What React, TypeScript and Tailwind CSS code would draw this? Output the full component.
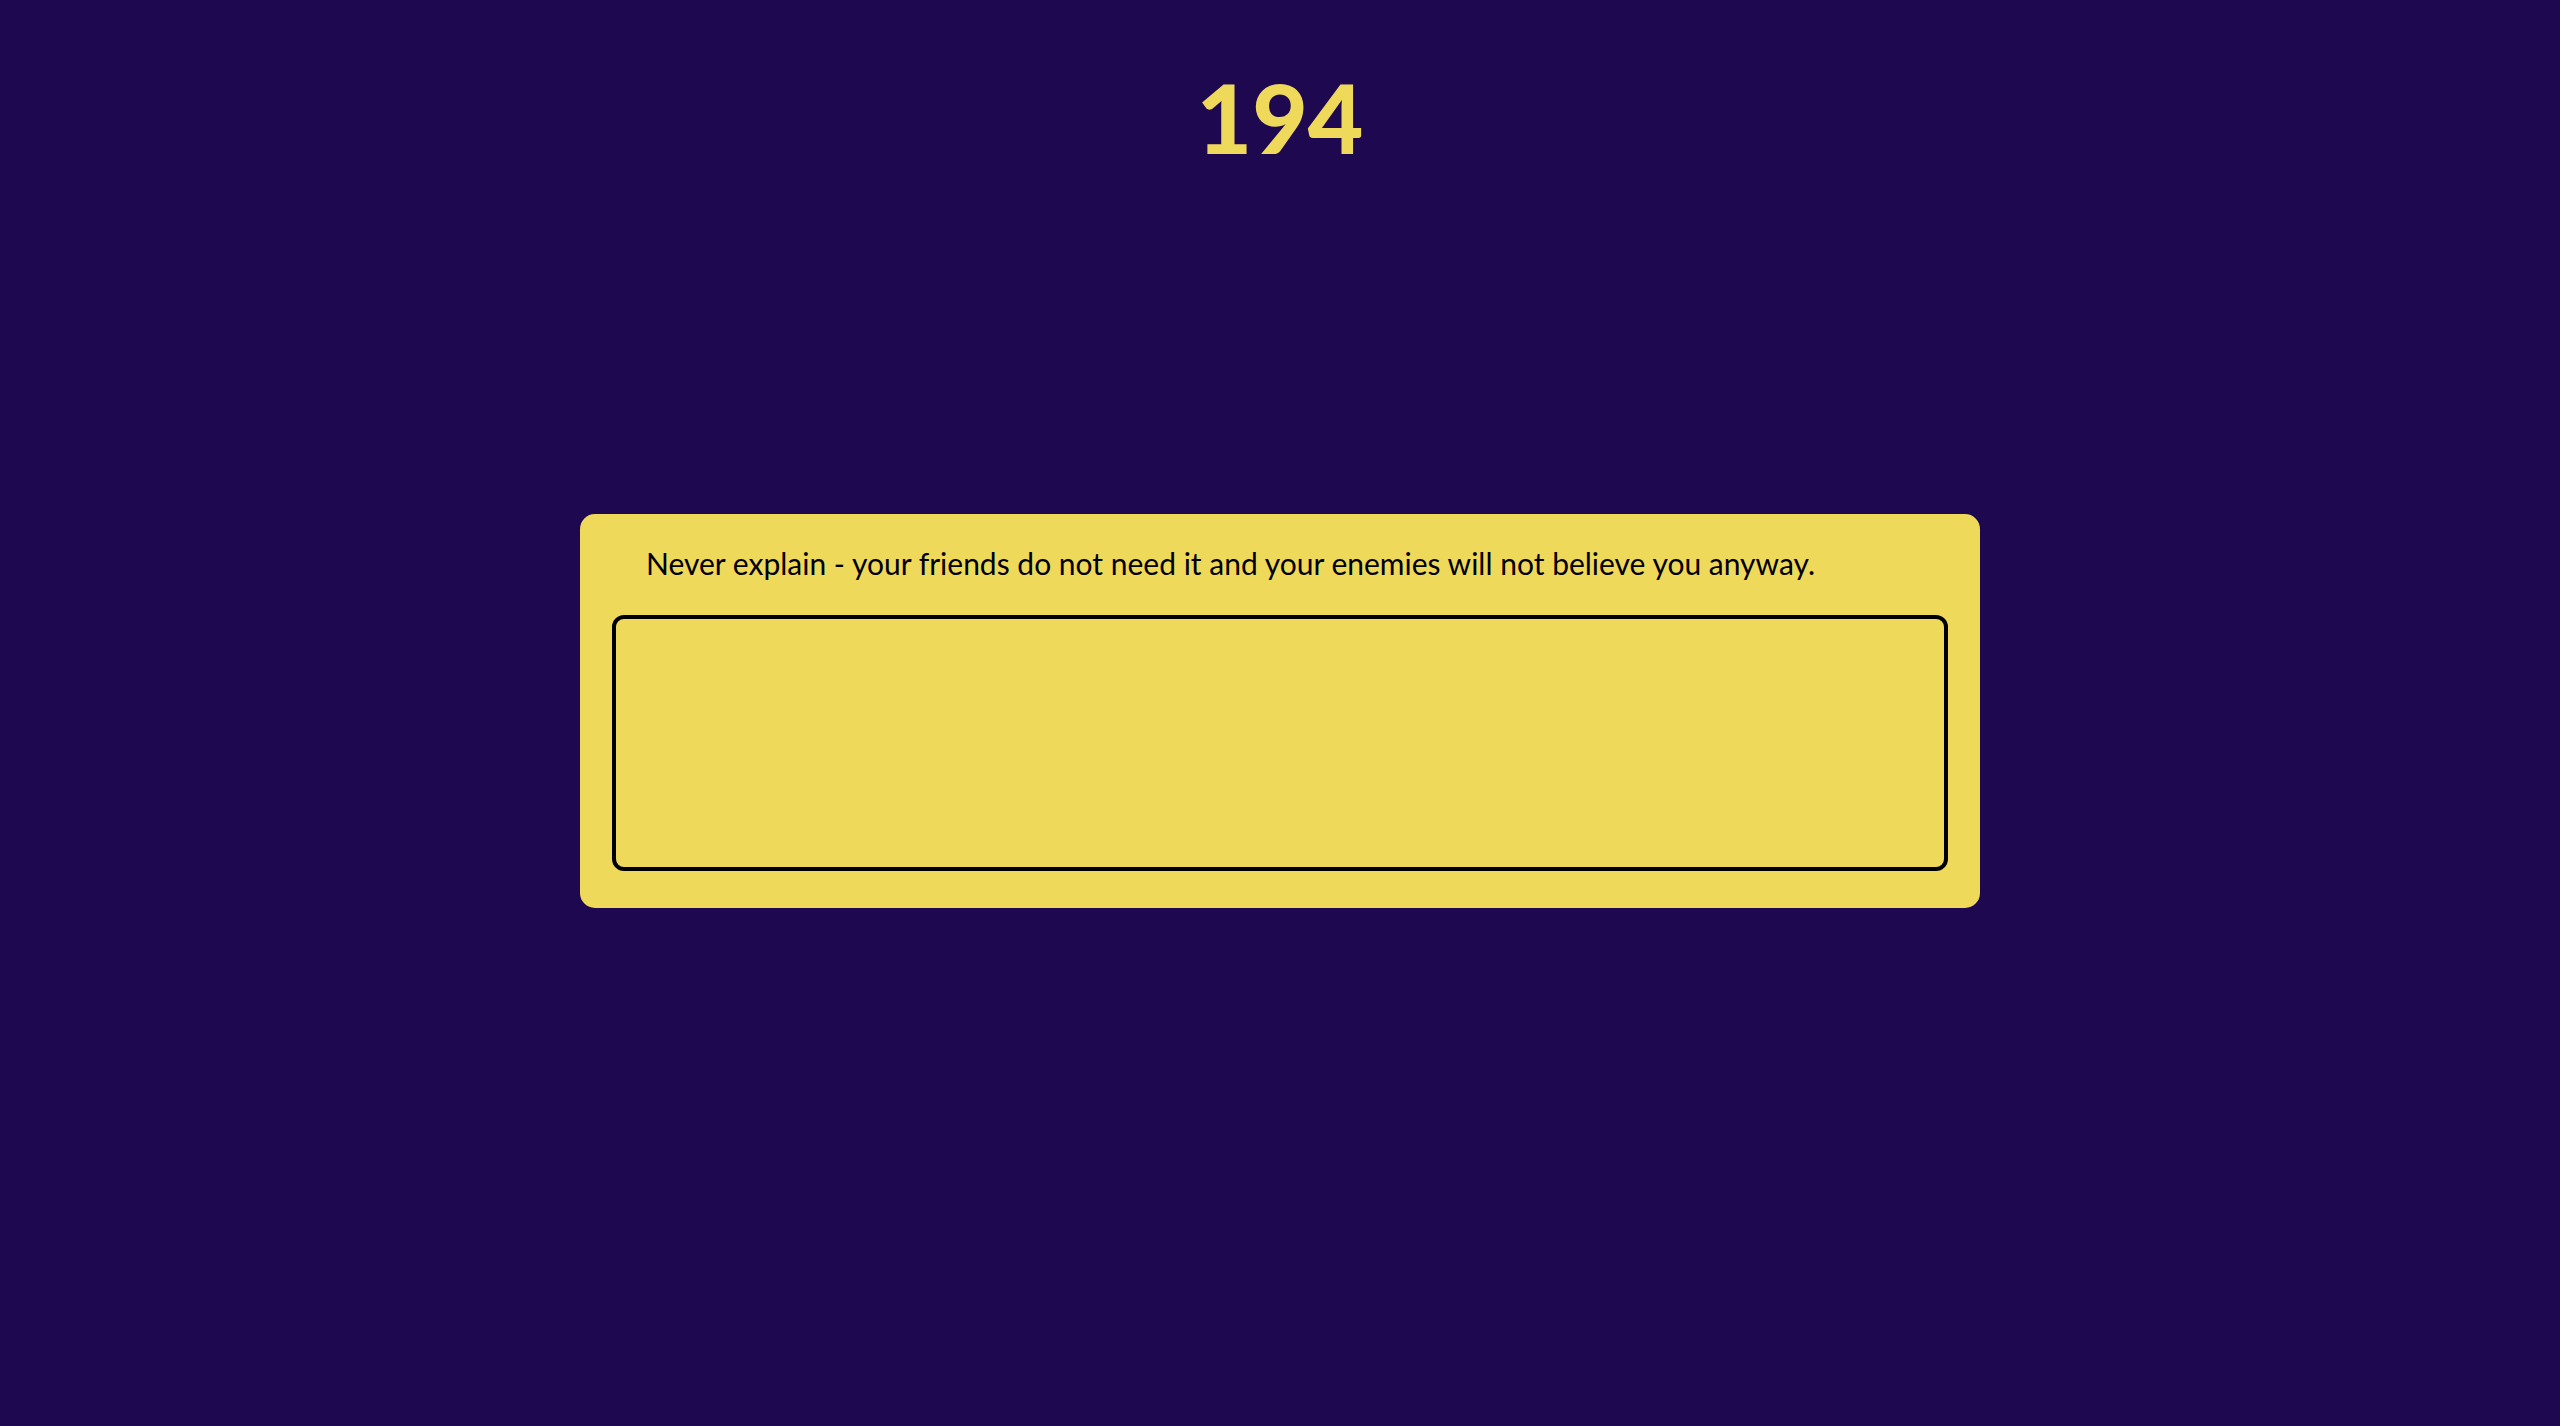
import React from "react";

export default function App() {
  return (
    <div className="min-h-screen w-full bg-[#1e0850] flex flex-col items-center font-['Lato','Open_Sans',sans-serif]">
      <h1 className="mt-[62px] text-[96px] leading-[110px] font-black text-[#efd95b]">
        194
      </h1>
      <div className="mt-[342px] w-[1400px] h-[394px] rounded-[15px] bg-[#efd95b] flex flex-col">
        <p className="mt-[29px] ml-[66px] text-[30px] leading-[40px] text-black">
          Never explain - your friends do not need it and your enemies will not believe you anyway.
        </p>
        <textarea className="mt-[32px] ml-[32px] w-[1336px] h-[256px] rounded-[12px] border-4 border-black bg-transparent resize-none outline-none" />
      </div>
    </div>
  );
}
